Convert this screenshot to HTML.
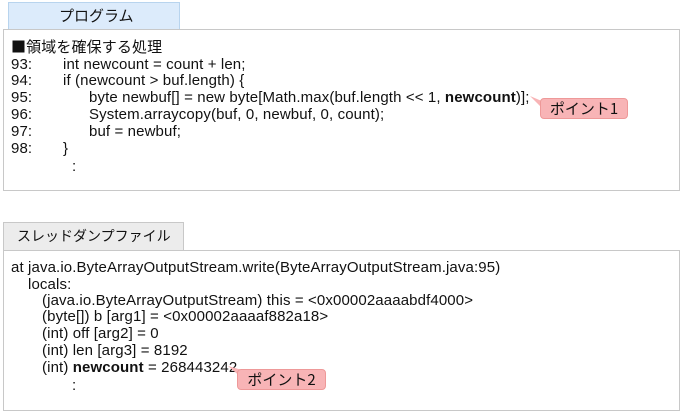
<!DOCTYPE html>
<html><head><meta charset="utf-8"><style>
body{margin:0;width:681px;height:412px;background:#fff;position:relative;overflow:hidden;font-family:"Liberation Sans","Noto Sans CJK JP",sans-serif;font-size:15px;color:#111}
.a{position:absolute;white-space:pre;line-height:17px;letter-spacing:0.12px}
.box{position:absolute;border:1px solid #c8c8c8;box-sizing:border-box;background:#fff}
.tab{position:absolute;box-sizing:border-box;font-family:"Noto Sans CJK JP",sans-serif;font-size:15px;line-height:26px;white-space:nowrap}
.call{position:absolute;background:#f8b4b6;border:1px solid #e99;border-radius:4px;box-sizing:border-box;font-family:"Noto Sans CJK JP",sans-serif;font-size:15px;line-height:19px;text-align:center}
.j{font-family:"Noto Sans CJK JP",sans-serif;font-size:15px}
b{font-weight:bold}
</style></head><body>
<div class="tab" style="left:8px;top:2px;width:172px;height:28px;background:#dcebfb;border:1px solid #b8d4ee;border-bottom:none;padding-left:50px">プログラム</div>
<div class="box" style="left:3px;top:29px;width:677px;height:162px"></div>
<div class="a j" style="left:11px;top:38px">■領域を確保する処理</div>
<div class="a" style="left:11px;top:56px">93:</div><div class="a" style="left:63px;top:56px">int newcount = count + len;</div>
<div class="a" style="left:11px;top:72px">94:</div><div class="a" style="left:63px;top:72px">if (newcount &gt; buf.length) {</div>
<div class="a" style="left:11px;top:89px">95:</div><div class="a" style="left:89px;top:89px">byte newbuf[] = new byte[Math.max(buf.length &lt;&lt; 1, <b>newcount</b>)];</div>
<div class="a" style="left:11px;top:106px">96:</div><div class="a" style="left:89px;top:106px">System.arraycopy(buf, 0, newbuf, 0, count);</div>
<div class="a" style="left:11px;top:123px">97:</div><div class="a" style="left:89px;top:123px">buf = newbuf;</div>
<div class="a" style="left:11px;top:140px">98:</div><div class="a" style="left:63px;top:140px">}</div>
<div class="a" style="left:72px;top:158px">:</div>
<svg style="position:absolute;left:528px;top:94px" width="20" height="20"><polygon points="2,2 16,8 16,16" fill="#f8b4b6"/></svg>
<div class="call" style="left:540px;top:98px;width:88px;height:21px">ポイント1</div>

<div class="tab" style="left:3px;top:222px;width:181px;height:29px;background:#ececec;border:1px solid #c8c8c8;border-bottom:none;padding-left:13px;font-size:14px">スレッドダンプファイル</div>
<div class="box" style="left:3px;top:250px;width:677px;height:161px"></div>
<div class="a" style="left:11px;top:259px">at java.io.ByteArrayOutputStream.write(ByteArrayOutputStream.java:95)</div>
<div class="a" style="left:28px;top:276px">locals:</div>
<div class="a" style="left:42px;top:292px">(java.io.ByteArrayOutputStream) this = &lt;0x00002aaaabdf4000&gt;</div>
<div class="a" style="left:42px;top:308px">(byte[]) b [arg1] = &lt;0x00002aaaaf882a18&gt;</div>
<div class="a" style="left:42px;top:325px">(int) off [arg2] = 0</div>
<div class="a" style="left:42px;top:342px">(int) len [arg3] = 8192</div>
<div class="a" style="left:42px;top:359px">(int) <b>newcount</b> = 268443242</div>
<div class="a" style="left:72px;top:377px">:</div>
<svg style="position:absolute;left:226px;top:364px" width="20" height="20"><polygon points="2,2 16,6 16,14" fill="#f8b4b6"/></svg>
<div class="call" style="left:237px;top:369px;width:89px;height:21px">ポイント2</div>
</body></html>
